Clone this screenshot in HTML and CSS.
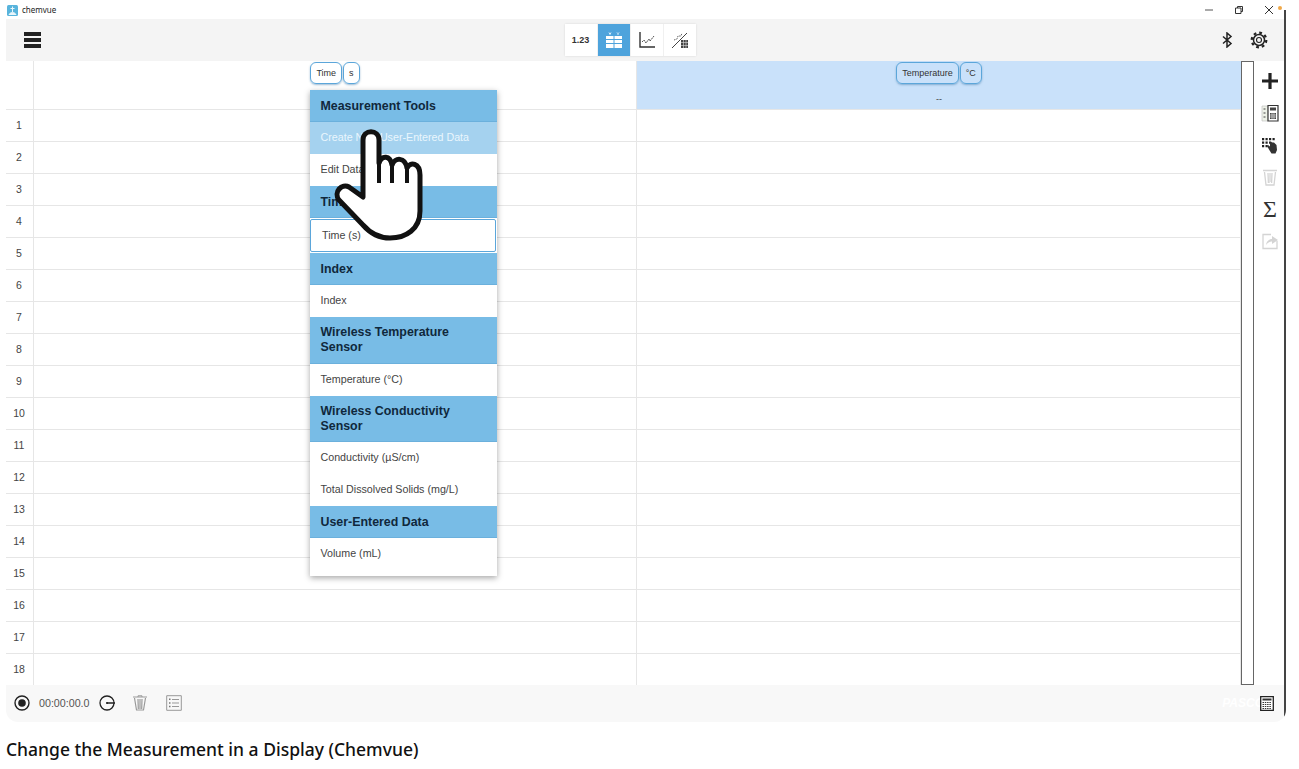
FILE: index.html
```html
<!DOCTYPE html>
<html lang="en">
<head>
    <meta charset="UTF-8">
    <meta name="viewport" content="width=device-width, initial-scale=1.0">
    <title>chemvue</title>
    <link rel="stylesheet" href="styles.css">
</head>
<body>
    <div class="window">
        <div class="titlebar">
            <svg class="app-logo" width="11" height="11" viewBox="0 0 11 11"><rect width="11" height="11" rx="1.5" fill="#58b4dc"/><path d="M5.5 1.5V7M3.5 3.5h4M2 9.5c1-1.5 2-2 3.500-2s2.500.5 3.500 2z" stroke="#e8f6fb" fill="#e8f6fb" stroke-width="1"/></svg>
            <span class="app-name">chemvue</span>
            <div class="win-controls">
                <svg width="10" height="10" viewBox="0 0 10 10"><path d="M1 5h8" stroke="#555" stroke-width="1"/></svg>
                <svg width="10" height="10" viewBox="0 0 10 10"><path d="M1.500 3h5.500v5.500h-5.500zM3.500 3V1.500h5v5H7" fill="none" stroke="#333" stroke-width="1"/></svg>
                <svg width="10" height="10" viewBox="0 0 10 10"><path d="M1 1l8 8M9 1l-8 8" stroke="#333" stroke-width="1"/></svg>
            </div>
            <span class="notify-dot"></span>
        </div>

        <div class="toolbar">
            <div class="hamburger"><span></span><span></span><span></span></div>
            <div class="view-tabs">
                <div class="view-tab digits">1.23</div>
                <div class="view-tab active">
                    <svg width="18" height="18" viewBox="0 0 18 18"><path d="M1 5h16v12H1z" fill="#fff"/><path d="M1 8.500h16M1 12.500h16M9 5v12" stroke="#4ea3dc" stroke-width="1"/><path d="M4 1.500l1 2M6 1.500l-1 2M12 1.500l1 1 1-1M13 2.500v1.500" stroke="#fff" stroke-width=".8" fill="none"/></svg>
                </div>
                <div class="view-tab">
                    <svg width="18" height="18" viewBox="0 0 18 18"><path d="M2 1v15h15" fill="none" stroke="#333" stroke-width="1.400"/><path d="M4 11l2-2 2 3 3-4 1 2 4-5" fill="none" stroke="#555" stroke-width="1" stroke-dasharray="2 .6"/></svg>
                </div>
                <div class="view-tab">
                    <svg width="18" height="18" viewBox="0 0 18 18"><path d="M1 17L16 2" stroke="#444" stroke-width="1"/><path d="M3 9l3-1 1-3 3 0 1-3" fill="none" stroke="#666" stroke-width="1" stroke-dasharray="1.500 1"/><path d="M10 9h7v8h-7z" fill="#444"/><path d="M10 11.500h7M10 14.500h7M12.500 9v8M15 9v8" stroke="#ddd" stroke-width=".6"/></svg>
                </div>
            </div>
            <div class="toolbar-right">
                <svg width="12" height="16" viewBox="0 0 12 16"><path d="M2 4.500l8 7L6 15V1l4 3.500-8 7" fill="none" stroke="#222" stroke-width="1.500"/></svg>
                <svg width="18" height="18" viewBox="0 0 18 18"><circle cx="9" cy="9" r="5.500" fill="none" stroke="#222" stroke-width="1.500"/><circle cx="9" cy="9" r="2.500" fill="none" stroke="#222" stroke-width="1.100"/><circle cx="9" cy="9" r="7.300" fill="none" stroke="#222" stroke-width="2.200" stroke-dasharray="2.800 2.930"/></svg>
            </div>
        </div>

        <div class="main">
            <div class="table">
                <div class="row head">
                    <div class="num"></div>
                    <div class="cell col-head">
                        <div class="pills"><span class="pill">Time</span><span class="pill unit">s</span></div>
                    </div>
                    <div class="cell col-head picked">
                        <div class="pills"><span class="pill">Temperature</span><span class="pill unit">°C</span></div>
                        <div class="dashes">--</div>
                    </div>
                </div>
                <div class="row"><div class="num">1</div><div class="cell"></div><div class="cell"></div></div>
                <div class="row"><div class="num">2</div><div class="cell"></div><div class="cell"></div></div>
                <div class="row"><div class="num">3</div><div class="cell"></div><div class="cell"></div></div>
                <div class="row"><div class="num">4</div><div class="cell"></div><div class="cell"></div></div>
                <div class="row"><div class="num">5</div><div class="cell"></div><div class="cell"></div></div>
                <div class="row"><div class="num">6</div><div class="cell"></div><div class="cell"></div></div>
                <div class="row"><div class="num">7</div><div class="cell"></div><div class="cell"></div></div>
                <div class="row"><div class="num">8</div><div class="cell"></div><div class="cell"></div></div>
                <div class="row"><div class="num">9</div><div class="cell"></div><div class="cell"></div></div>
                <div class="row"><div class="num">10</div><div class="cell"></div><div class="cell"></div></div>
                <div class="row"><div class="num">11</div><div class="cell"></div><div class="cell"></div></div>
                <div class="row"><div class="num">12</div><div class="cell"></div><div class="cell"></div></div>
                <div class="row"><div class="num">13</div><div class="cell"></div><div class="cell"></div></div>
                <div class="row"><div class="num">14</div><div class="cell"></div><div class="cell"></div></div>
                <div class="row"><div class="num">15</div><div class="cell"></div><div class="cell"></div></div>
                <div class="row"><div class="num">16</div><div class="cell"></div><div class="cell"></div></div>
                <div class="row"><div class="num">17</div><div class="cell"></div><div class="cell"></div></div>
                <div class="row"><div class="num">18</div><div class="cell"></div><div class="cell"></div></div>

                <div class="menu">
                    <div class="menu-head">Measurement Tools</div>
                    <div class="menu-item hover">Create New User-Entered Data</div>
                    <div class="menu-item">Edit Data</div>
                    <div class="menu-head">Time</div>
                    <div class="menu-item selected">Time (s)</div>
                    <div class="menu-head">Index</div>
                    <div class="menu-item">Index</div>
                    <div class="menu-head tall">Wireless Temperature Sensor</div>
                    <div class="menu-item">Temperature (°C)</div>
                    <div class="menu-head tall short">Wireless Conductivity Sensor</div>
                    <div class="menu-item">Conductivity (µS/cm)</div>
                    <div class="menu-item">Total Dissolved Solids (mg/L)</div>
                    <div class="menu-head">User-Entered Data</div>
                    <div class="menu-item">Volume (mL)</div>
                </div>

                <svg class="hand" width="96" height="120" viewBox="0 0 96 120">
                    <path d="M33 72V15C33 4 49 4 49 15V38C52 30 60 30 62 40C65 32 75 32 77 43C80 36 90 38 90 50V86C90 104 76 113 60 113C48 113 40 108 33 100L9 75C3 67 12 58 19 62L33 72Z" fill="#fff" stroke="#111" stroke-width="5" stroke-linejoin="round"/>
                    <path d="M49 36V58M62 40V58M77 43V58" fill="none" stroke="#111" stroke-width="4"/>
                </svg>
            </div>

            <div class="scrollbar"></div>

            <div class="side-tools">
                <div class="side-tool">
                    <svg width="18" height="18" viewBox="0 0 18 18"><path d="M1 9h16M9 1v16" stroke="#222" stroke-width="3.200"/></svg>
                </div>
                <div class="side-tool">
                    <svg width="18" height="18" viewBox="0 0 18 18"><path d="M1 2h6v15H1z" fill="#eef2e8" stroke="#bbb" stroke-width=".6"/><path d="M2.500 5h2M2.500 9h2M2.500 13h2" stroke="#444" stroke-width="1.200"/><path d="M7 1.500h10v15.500H7z" fill="#fff" stroke="#333" stroke-width="1.200"/><path d="M9 3.500h6v3H9z" fill="#444"/><path d="M9 9h6v6H9z" fill="#444"/><path d="M9 11h6M9 13h6M11 9v6M13 9v6" stroke="#fff" stroke-width=".6"/></svg>
                </div>
                <div class="side-tool">
                    <svg width="18" height="18" viewBox="0 0 18 18"><path d="M1 2h2.200v2.200H1zM4.500 2h2.200v2.200H4.500zM8 2h2.200v2.200H8zM11.500 2h2.200v2.200h-2.200zM1 5.500h2.200v2.200H1zM4.500 5.500h2.200v2.200H4.500zM8 5.500h2.200v2.200H8zM1 9h2.200v2.200H1zM4.500 9h2.200v2.200H4.500z" fill="#222"/><path d="M6 10l1-1 2 1.500V6.500l1.500-.5 1 .5 1.500 0 2.500 2.500 .5 5-1.500 3.500h-4L8 13.500z" fill="#333"/></svg>
                </div>
                <div class="side-tool">
                    <svg width="16" height="18" viewBox="0 0 16 18"><path d="M1 2.500h14M2.500 4l1.500 13h8l1.500-13M6 5l.4 10M8 5v10M10 5l-.4 10" fill="none" stroke="#d4d4d4" stroke-width="1.300"/></svg>
                </div>
                <div class="side-tool sigma">Σ</div>
                <div class="side-tool">
                    <svg width="18" height="18" viewBox="0 0 18 18"><path d="M16 9v7.500H2V2.500h8" fill="none" stroke="#d4d4d4" stroke-width="1.300"/><path d="M5 13c.5-3.500 3-6 6-6V4L17 8l-6 4V9.500c-2.500 0-4.500 1.500-6 3.500z" fill="#d4d4d4"/></svg>
                </div>
            </div>
        </div>

        <div class="bottombar">
            <svg width="16" height="16" viewBox="0 0 16 16"><circle cx="8" cy="8" r="7" fill="none" stroke="#222" stroke-width="1.400"/><circle cx="8" cy="8" r="3.800" fill="#222"/></svg>
            <span class="timer">00:00:00.0</span>
            <svg class="clock" width="16" height="16" viewBox="0 0 16 16"><circle cx="8" cy="8" r="7" fill="none" stroke="#222" stroke-width="1.300"/><path d="M8 8h8" stroke="#222" stroke-width="1.500"/><circle cx="8" cy="8" r="1.100" fill="#222"/></svg>
            <svg class="trash" width="14" height="16" viewBox="0 0 14 16"><path d="M0 2h14M1.500 3l2 12h7l2-12M5 4l.3 10M7 4v10M9 4l-.3 10" fill="none" stroke="#999" stroke-width="1.200"/><path d="M5 2V.8h4V2" fill="none" stroke="#999"/></svg>
            <svg class="list" width="16" height="16" viewBox="0 0 16 16"><path d="M.7.7h14.600v14.600H.7z" fill="none" stroke="#999"/><path d="M6 4.500h7M6 8h7M6 11.500h7" stroke="#999"/><path d="M3 3.500h1.500v1.500H3zM3 7.200h1.500v1.500H3zM3 10.800h1.500v1.500H3z" fill="#777"/></svg>
            <span class="brand">PASCO</span>
            <svg class="calc" width="14" height="15" viewBox="0 0 14 15"><path d="M.7.7h12.600v13.600H.7z" fill="#fff" stroke="#222" stroke-width="1.300"/><path d="M2.500 2.500h9v2h-9z" fill="#333"/><path d="M2.500 6.500h9M2.500 8.500h9M2.500 10.500h9M2.500 12.500h9" stroke="#333" stroke-width="1" stroke-dasharray="1.500 .8"/></svg>
        </div>
    </div>

    <p class="caption">Change the Measurement in a Display (Chemvue)</p>
</body>
</html>
```

FILE: styles.css
```css
body {
    margin: 0;
    background-color: #fff;
    font-family: "Liberation Sans", Arial, sans-serif;
    color: #333;
}
.window {
    position: relative;
    width: 1280px;
    margin-left: 6px;
    height: 722px;
    display: flex;
    flex-direction: column;
    border-bottom-left-radius: 12px;
    border-bottom-right-radius: 12px;
    overflow: hidden;
}
.window::after {
    content: "";
    position: absolute;
    top: 10px;
    right: 0;
    bottom: 0;
    width: 2px;
    background-color: #444;
}
.titlebar {
    height: 19px;
    display: flex;
    align-items: center;
    background-color: #fff;
}
.app-logo {
    margin-left: 1px;
    margin-top: 1px;
}
.app-name {
    margin-left: 4px;
    font-family: "Noto Sans", sans-serif;
    font-size: 8px;
    color: #222;
}
.win-controls {
    margin-left: auto;
    margin-right: 12px;
    display: flex;
    gap: 20px;
}
.notify-dot {
    position: absolute;
    top: 6px;
    right: 4px;
    width: 4px;
    height: 4px;
    border-radius: 50%;
    background-color: #f0a848;
}
.toolbar {
    position: relative;
    height: 42px;
    display: flex;
    align-items: center;
    justify-content: center;
    background-color: #f4f4f4;
}
.hamburger {
    position: absolute;
    left: 18px;
    top: 13px;
    width: 17px;
    display: flex;
    flex-direction: column;
    gap: 2px;
}
.hamburger span {
    height: 4px;
    background-color: #222;
}
.view-tabs {
    display: flex;
    gap: 1px;
    margin-right: 32px;
    background-color: #f0f0f0;
    box-shadow: 0 0 2px rgba(0, 0, 0, 0.12);
}
.view-tab {
    width: 32px;
    height: 32px;
    display: flex;
    align-items: center;
    justify-content: center;
    background-color: #fff;
}
.view-tab.active {
    background-color: #4ea3dc;
}
.digits {
    font-size: 9px;
    font-weight: bold;
    color: #333;
}
.toolbar-right {
    position: absolute;
    right: 18px;
    top: 12px;
    display: flex;
    align-items: center;
    gap: 17px;
}
.main {
    height: 624px;
    display: flex;
}
.table {
    position: relative;
    width: 1235px;
    overflow: hidden;
}
.row {
    display: grid;
    grid-template-columns: 28px 603px 604px;
    height: 32px;
    box-sizing: border-box;
    border-bottom: 1px solid #e6e6e6;
}
.row.head {
    height: 49px;
}
.num {
    display: flex;
    align-items: center;
    justify-content: center;
    border-right: 1px solid #e6e6e6;
    font-size: 10.5px;
    color: #444;
    padding-right: 1px;
    padding-bottom: 2px;
}
.cell {
    border-right: 1px solid #e6e6e6;
}
.col-head {
    display: flex;
    flex-direction: column;
    align-items: center;
    padding-top: 1px;
}
.col-head.picked {
    background-color: #c9e1fa;
    border-right: none;
}
.pills {
    display: flex;
    gap: 1px;
}
.pill {
    height: 20px;
    padding: 0 5px;
    display: flex;
    align-items: center;
    border: 1px solid #5ba6da;
    border-radius: 6px;
    font-size: 9px;
    color: #333;
    box-shadow: 0 1px 2px rgba(60, 120, 170, 0.5);
}
.dashes {
    margin-top: 10px;
    font-size: 9px;
    color: #444;
}
.menu {
    position: absolute;
    left: 304px;
    top: 29px;
    width: 187px;
    padding-bottom: 6px;
    background-color: #fff;
    box-shadow: 0 2px 6px rgba(0, 0, 0, 0.35);
}
.menu-head {
    height: 32px;
    box-sizing: border-box;
    padding: 2px 10.5px 0;
    display: flex;
    align-items: center;
    background-color: #78bce6;
    border-bottom: 1px solid #6bb0dc;
    font-size: 12.4px;
    font-weight: bold;
    line-height: 15px;
    color: #10283c;
}
.menu-head.tall {
    height: 47px;
    padding-top: 0;
}
.menu-head.short {
    height: 46px;
}
.menu-item {
    height: 30px;
    padding: 0 10.5px 2px;
    display: flex;
    align-items: center;
    font-size: 10.7px;
    color: #444;
}
.menu-item.hover {
    background-color: #a5d2ef;
    color: #eaf6fd;
}
.menu-item.selected {
    height: 29px;
    margin: 1px 1px 1px 0;
    background-color: #fff;
    border: 1px solid #5ba6da;
    border-radius: 2px;
    padding: 0 11px 2px;
}
.hand {
    position: absolute;
    left: 324px;
    top: 64px;
}
.scrollbar {
    width: 11px;
    height: 622px;
    border: 1px solid #666;
    background-color: #fff;
}
.side-tools {
    flex: 1;
    padding-top: 4px;
    display: flex;
    flex-direction: column;
    align-items: center;
}
.side-tool {
    height: 32px;
    display: flex;
    align-items: center;
    justify-content: center;
}
.sigma {
    font-family: "Liberation Serif", serif;
    font-size: 24px;
    color: #333;
}
.bottombar {
    height: 36px;
    display: flex;
    align-items: center;
    padding: 0 12px 1px 8px;
    background-color: #f8f8f8;
}
.timer {
    margin-left: 9px;
    font-size: 10.7px;
    color: #555;
}
.clock {
    margin-left: 9px;
}
.trash {
    margin-left: 18px;
}
.list {
    margin-left: 19px;
}
.brand {
    margin-left: auto;
    margin-right: -4px;
    font-size: 12px;
    font-weight: bold;
    font-style: italic;
    color: #fff;
}
.calc {
    position: relative;
}
.caption {
    margin: 14px 0 0 6px;
    font-family: "Noto Sans", sans-serif;
    font-size: 17.5px;
    font-weight: 500;
    line-height: 27px;
    color: #111;
}
```
